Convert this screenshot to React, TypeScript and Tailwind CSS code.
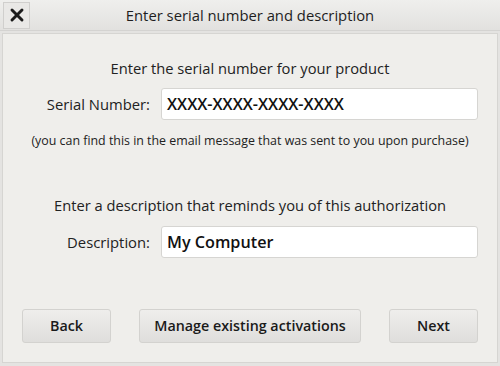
import { X } from "lucide-react";

const font = { fontFamily: '"Open Sans", "Noto Sans", sans-serif' };

const Field = ({ label, value }: { label: string; value: string }) => (
  <div className="flex items-center">
    <div className="w-[151px] pr-[11px] text-right text-[14.8px] text-[#222]">{label}</div>
    <div className="w-[317px] h-[32px] rounded-[3px] border border-[#d6d5d2] bg-white flex items-center px-[5px] text-[16.2px] font-semibold text-[#111]">
      {value}
    </div>
  </div>
);

const Button = ({ label, w }: { label: string; w: string }) => (
  <button
    className={`${w} h-[34px] rounded-[3px] border border-[#d3d2cf] bg-gradient-to-b from-[#efeeec] to-[#dfdedc] text-[14.3px] font-semibold text-[#1a1a1a]`}
  >
    {label}
  </button>
);

const App = () => {
  return (
    <div className="w-[500px] h-[366px] bg-[#e4e3e1] flex flex-col" style={font}>
      {/* title bar */}
      <div className="h-[31px] flex items-center px-[3px] bg-gradient-to-b from-[#efefed] to-[#e2e1df] border-b border-[#d4d3d1]">
        <div className="w-[27px] h-[27px] border border-[#d0cfcd] bg-[#e9e8e6] flex items-center justify-center">
          <X size={20} strokeWidth={3.5} className="text-[#1b1b1b]" />
        </div>
        <div className="flex-1 text-center text-[14.8px] text-[#1e1e1e] pr-[27px]">
          Enter serial number and description
        </div>
      </div>

      {/* body */}
      <div className="flex-1 mx-[2px] mt-[2px] mb-[3px] border border-[#d6d5d2] bg-[#efeeeb] flex flex-col">
        <div className="text-center text-[14.7px] text-[#222] mt-[23px]">
          Enter the serial number for your product
        </div>
        <div className="mt-[9px] pl-[7px]">
          <Field label="Serial Number:" value="XXXX-XXXX-XXXX-XXXX" />
        </div>
        <div className="text-center text-[12.4px] text-[#222] mt-[12px]">
          (you can find this in the email message that was sent to you upon purchase)
        </div>
        <div className="text-center text-[14.7px] text-[#222] mt-[43px]">
          Enter a description that reminds you of this authorization
        </div>
        <div className="mt-[10px] pl-[7px]">
          <Field label="Description:" value="My Computer" />
        </div>
        <div className="mt-auto mb-[19px] flex justify-between px-[19px]">
          <Button label="Back" w="w-[89px]" />
          <Button label="Manage existing activations" w="w-[222px]" />
          <Button label="Next" w="w-[89px]" />
        </div>
      </div>
    </div>
  );
};

export default App;
